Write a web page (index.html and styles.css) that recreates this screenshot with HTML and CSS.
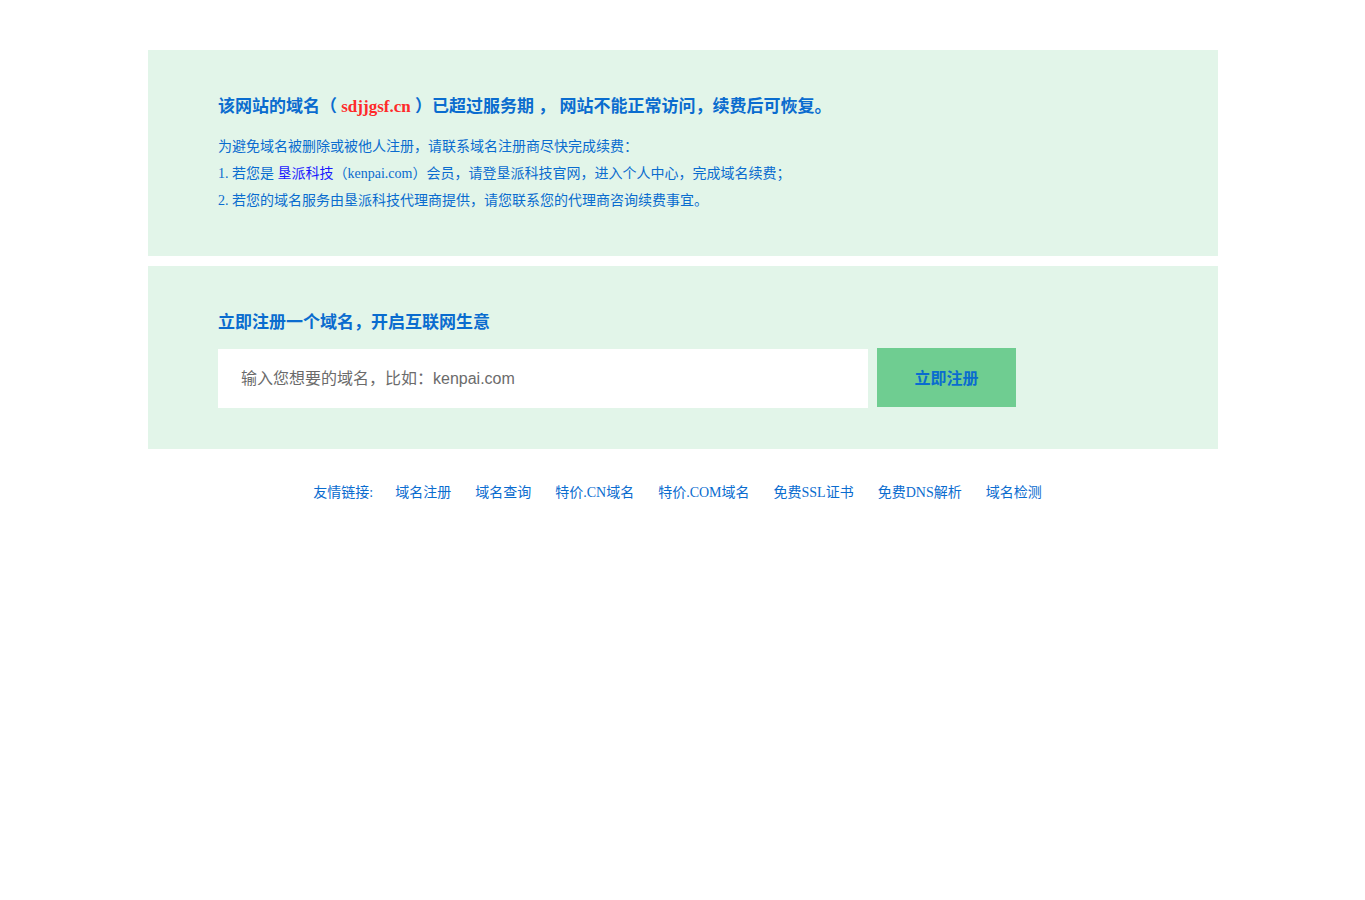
FILE: index.html
```html
<!DOCTYPE html>
<html lang="zh-CN">
<head>
<meta charset="utf-8">
<title>域名已过期</title>
<link rel="stylesheet" href="styles.css">
</head>
<body>
<div class="wrap">
  <div class="panel notice">
    <h1 class="title">该网站的域名（ <span class="domain">sdjjgsf.cn</span> ）已超过服务期 ， 网站不能正常访问，续费后可恢复。</h1>
    <p class="line">为避免域名被删除或被他人注册，请联系域名注册商尽快完成续费：</p>
    <p class="line">1. 若您是 <a class="brand" href="#">垦派科技</a>（kenpai.com）会员，请登垦派科技官网，进入个人中心，完成域名续费；</p>
    <p class="line">2. 若您的域名服务由垦派科技代理商提供，请您联系您的代理商咨询续费事宜。</p>
  </div>
  <div class="panel register">
    <h2 class="title">立即注册一个域名，开启互联网生意</h2>
    <div class="search">
      <input class="input" type="text" placeholder="输入您想要的域名，比如：kenpai.com">
      <button class="btn" type="button">立即注册</button>
    </div>
  </div>
  <div class="links">
    <span class="label">友情链接:</span>
    <a href="#">域名注册</a>
    <a href="#">域名查询</a>
    <a href="#">特价.CN域名</a>
    <a href="#">特价.COM域名</a>
    <a href="#">免费SSL证书</a>
    <a href="#">免费DNS解析</a>
    <a href="#">域名检测</a>
  </div>
</div>
</body>
</html>
```

FILE: styles.css
```css
* { box-sizing: border-box; }
html, body { margin: 0; padding: 0; background: #fff; }
body {
  font-family: "Liberation Serif", "Noto Sans CJK SC", serif;
  color: #0a6ccf;
}
.wrap {
  width: 1070px;
  margin: 50px auto 0 148px;
}
.panel {
  background: #e2f5e9;
  padding-left: 70px;
}
.notice {
  padding-top: 45px;
  padding-bottom: 42px;
  margin-bottom: 10px;
}
.register {
  padding-top: 45px;
  padding-bottom: 41px;
}
.title {
  margin: 0;
  font-size: 17px;
  line-height: 24px;
  font-weight: bold;
  color: #0a6ccf;
}
.domain { color: #ff2a2a; }
.notice .title { margin-bottom: 14px; }
.line {
  margin: 0;
  font-size: 14px;
  line-height: 27px;
  color: #0a6ccf;
}
.brand { color: #1a1aff; text-decoration: none; }
.register .title { margin-bottom: 13px; }
.search {
  display: flex;
  align-items: flex-start;
  gap: 9px;
}
.input {
  width: 650px;
  height: 59px;
  margin-top: 1px;
  border: 0;
  padding: 0 0 0 23px;
  background: #fff;
  font-family: "Liberation Sans", "Noto Sans CJK SC", sans-serif;
  font-size: 16px;
  color: #333;
  outline: none;
}
.input::placeholder { color: #6b6b6b; }
.btn {
  width: 139px;
  height: 59px;
  border: 0;
  padding: 0 0 2px;
  background: #6fcd91;
  color: #0a6ccf;
  font-family: "Liberation Sans", "Noto Sans CJK SC", sans-serif;
  font-size: 16px;
  font-weight: bold;
  cursor: pointer;
}
.links {
  margin-top: 34px;
  display: flex;
  justify-content: center;
  gap: 24px;
  font-size: 14px;
  line-height: 20px;
  padding-right: 11px;
}
.links a, .links .label {
  color: #0a6ccf;
  text-decoration: none;
}
.links .label { margin-right: -2px; }
```
